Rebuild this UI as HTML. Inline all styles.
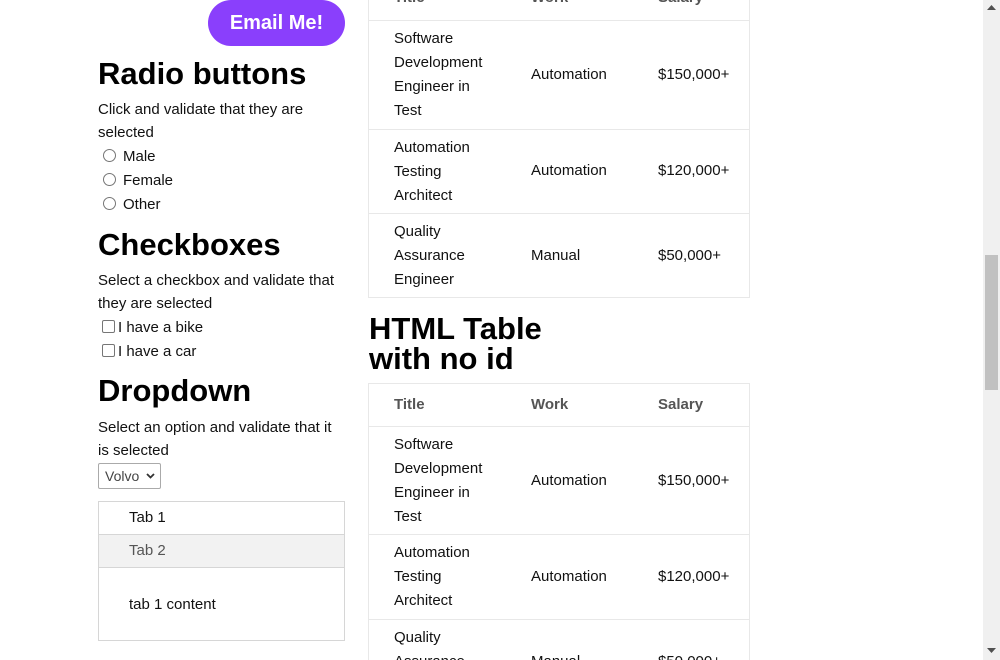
<!DOCTYPE html>
<html style="overflow:hidden;height:660px"><head><style>
*{margin:0;padding:0;box-sizing:border-box}
html,body{width:1000px;height:660px;overflow:hidden}
body{background:#fff;font-family:"Liberation Sans",Arial,sans-serif;color:#111;position:relative}
.a{position:absolute;white-space:nowrap}
.t{font-size:15px;line-height:24px}
h2{position:absolute;font-size:31px;font-weight:bold;line-height:30px;color:#000;white-space:nowrap}
.btn{position:absolute;left:208px;top:0;width:137px;height:46px;background:#8a3ffc;border-radius:23px;color:#fff;font-weight:bold;font-size:20px;line-height:46px;text-align:center}
.radio{position:absolute;width:13px;height:13px;border:1px solid #767676;border-radius:50%;background:#fff}
.cb{position:absolute;width:13px;height:13px;border:1px solid #767676;border-radius:2px;background:#fff}
.tbl{position:absolute;left:368px;width:382px;border:1px solid #e8e8e8}
.hl{position:absolute;left:369px;width:380px;height:1px;background:#e8e8e8}
.th{font-weight:bold;color:#555;font-size:15px}
.w{white-space:normal}
.sb{position:absolute;left:983px;top:0;width:17px;height:660px;background:#f0f0f0}
</style></head><body>
<div class="btn">Email Me!</div>

<h2 style="left:98px;top:59px">Radio buttons</h2>
<div class="a t" style="left:98px;top:98px">Click and validate that they are</div>
<div class="a t" style="left:98px;top:121px">selected</div>
<div class="radio" style="left:103px;top:149px"></div><div class="a t" style="left:123px;top:145px">Male</div>
<div class="radio" style="left:103px;top:173px"></div><div class="a t" style="left:123px;top:169px">Female</div>
<div class="radio" style="left:103px;top:197px"></div><div class="a t" style="left:123px;top:193px">Other</div>

<h2 style="left:98px;top:230px">Checkboxes</h2>
<div class="a t" style="left:98px;top:269px">Select a checkbox and validate that</div>
<div class="a t" style="left:98px;top:292px">they are selected</div>
<div class="cb" style="left:102px;top:320px"></div><div class="a t" style="left:118px;top:316px">I have a bike</div>
<div class="cb" style="left:102px;top:344px"></div><div class="a t" style="left:118px;top:340px">I have a car</div>

<h2 style="left:98px;top:376px">Dropdown</h2>
<div class="a t" style="left:98px;top:416px">Select an option and validate that it</div>
<div class="a t" style="left:98px;top:439px">is selected</div>
<div class="a" style="left:98px;top:463px;width:63px;height:26px;border:1px solid #aaa;border-radius:2px;font-size:14px;line-height:24px;padding-left:6px;color:#444">Volvo<svg style="position:absolute;right:5px;top:9px" width="9" height="6" viewBox="0 0 9 6"><path d="M1 1l3.5 3.5L8 1" stroke="#333" stroke-width="1.8" fill="none"/></svg></div>

<div class="a" style="left:98px;top:501px;width:247px;height:140px;border:1px solid #d6d6d6"></div>
<div class="a" style="left:99px;top:534px;width:245px;height:34px;background:#f2f2f2;border-top:1px solid #d6d6d6;border-bottom:1px solid #d6d6d6"></div>
<div class="a t" style="left:129px;top:506px">Tab 1</div>
<div class="a t" style="left:129px;top:539px;color:#555">Tab 2</div>
<div class="a t" style="left:129px;top:593px">tab 1 content</div>

<!-- table 1 -->
<div class="tbl" style="top:-20px;height:318px"></div>
<div class="hl" style="top:20px"></div>
<div class="hl" style="top:129px"></div>
<div class="hl" style="top:213px"></div>
<div class="a t th" style="left:394px;top:-14px">Title</div>
<div class="a t th" style="left:531px;top:-14px">Work</div>
<div class="a t th" style="left:658px;top:-14px">Salary</div>
<div class="a t w" style="left:394px;top:27px;width:96px">Software Development Engineer in Test</div>
<div class="a t" style="left:531px;top:63px">Automation</div><div class="a t" style="left:658px;top:63px">$150,000+</div>
<div class="a t w" style="left:394px;top:136px;width:90px">Automation Testing Architect</div>
<div class="a t" style="left:531px;top:159px">Automation</div><div class="a t" style="left:658px;top:159px">$120,000+</div>
<div class="a t w" style="left:394px;top:220px;width:90px">Quality Assurance Engineer</div>
<div class="a t" style="left:531px;top:244px">Manual</div><div class="a t" style="left:658px;top:244px">$50,000+</div>

<h2 style="left:369px;top:314px">HTML Table</h2>
<h2 style="left:369px;top:344px">with no id</h2>

<!-- table 2 -->
<div class="tbl" style="top:383px;height:300px"></div>
<div class="hl" style="top:426px"></div>
<div class="hl" style="top:534px"></div>
<div class="hl" style="top:619px"></div>
<div class="a t th" style="left:394px;top:393px">Title</div>
<div class="a t th" style="left:531px;top:393px">Work</div>
<div class="a t th" style="left:658px;top:393px">Salary</div>
<div class="a t w" style="left:394px;top:433px;width:96px">Software Development Engineer in Test</div>
<div class="a t" style="left:531px;top:469px">Automation</div><div class="a t" style="left:658px;top:469px">$150,000+</div>
<div class="a t w" style="left:394px;top:541px;width:90px">Automation Testing Architect</div>
<div class="a t" style="left:531px;top:565px">Automation</div><div class="a t" style="left:658px;top:565px">$120,000+</div>
<div class="a t w" style="left:394px;top:626px;width:90px">Quality Assurance Engineer</div>
<div class="a t" style="left:531px;top:650px">Manual</div><div class="a t" style="left:658px;top:650px">$50,000+</div>

<div class="sb">
<svg style="position:absolute;left:4px;top:5px" width="9" height="6"><path d="M0 5h9L4.5 0z" fill="#505050"/></svg>
<div style="position:absolute;left:2px;top:255px;width:13px;height:135px;background:#c1c1c1"></div>
<svg style="position:absolute;left:4px;top:648px" width="9" height="6"><path d="M0 0h9L4.5 5z" fill="#505050"/></svg>
</div>
</body></html>
